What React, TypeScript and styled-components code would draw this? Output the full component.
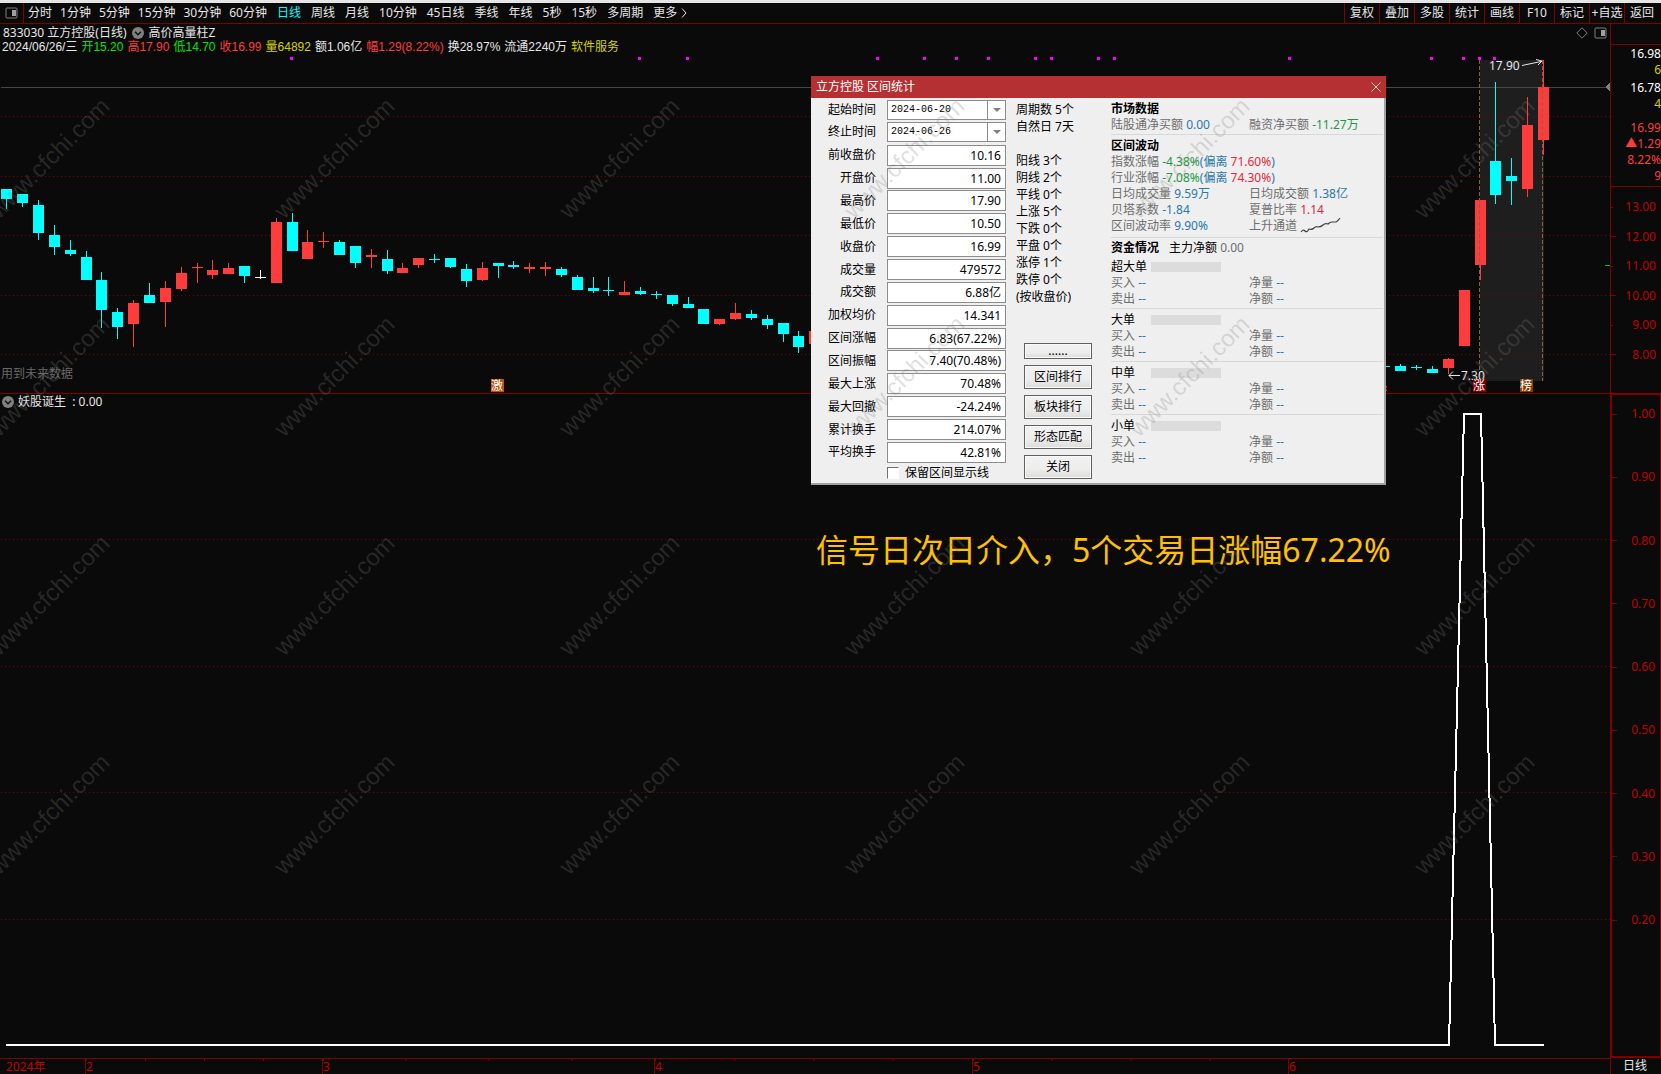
import React from "react";
import styled, { createGlobalStyle } from "styled-components";

const RED = "#ff3c3c";
const CYAN = "#00ffff";
const LINE = "#800000";
const UI_FONT = '"Noto Sans", "Noto Sans CJK SC", sans-serif';

const GlobalStyle = createGlobalStyle`
  * { box-sizing: border-box; }
  body { margin: 0; background: #0a0a0a; }
  button, input, select { font: inherit; color: inherit; margin: 0; }
`;

const Page = styled.div`
  position: relative;
  display: flex;
  flex-direction: column;
  min-height: 100vh;
  overflow: hidden;
  border-top: 3px solid #e6e6e6;
  background: #0a0a0a;
  color: #e6e6e6;
  font-family: ${UI_FONT};
  font-size: 12px;
  line-height: 16px;
`;

/* ---------- toolbar ---------- */

const Toolbar = styled.nav`
  display: flex;
  justify-content: space-between;
  height: 21px;
  border-bottom: 1px solid ${LINE};
`;

const ToolGroup = styled.div`
  display: flex;
  align-items: stretch;
`;

const PeriodGroup = styled(ToolGroup)<{ $gap: number }>`
  gap: ${(p) => p.$gap}px;
`;

const ActionGroup = styled(ToolGroup)`
  padding-right: 2px;
`;

const PlainButton = styled.button`
  display: flex;
  align-items: center;
  padding: 0;
  border: 0;
  background: none;
  white-space: nowrap;
  cursor: pointer;
`;

const LayoutButton = styled(PlainButton)`
  justify-content: center;
  width: 24px;
  margin-right: -4px;
  border-right: 1px solid ${LINE};
`;

const Period = styled(PlainButton)<{ $active?: boolean }>`
  color: ${(p) => (p.$active ? CYAN : "#e6e6e6")};
`;

const Action = styled(PlainButton)`
  justify-content: center;
  width: 35px;
  border-left: 1px solid ${LINE};
`;

/* ---------- chart area ---------- */

const Workspace = styled.main`
  flex: 1;
  display: grid;
  grid-template-columns: minmax(0, 1fr) 51px;
  grid-template-rows: 370px minmax(0, 1fr) 16px;
`;

const Panel = styled.section`
  position: relative;
  display: flex;
  flex-direction: column;
  min-height: 0;
`;

const PricePanel = styled(Panel)`
  padding-top: 2px;
  border-bottom: 1px solid ${LINE};
`;

const Plot = styled.svg`
  display: block;
  flex: 1 1 0;
  width: 100%;
  min-height: 0;
`;

const InfoRow = styled.div<{ $gap: number; $inset: number }>`
  display: flex;
  align-items: center;
  gap: ${(p) => p.$gap}px;
  height: 14px;
  padding: 0 3px 0 ${(p) => p.$inset}px;
  line-height: 14px;
  white-space: nowrap;
`;

const DayRow = styled(InfoRow)`
  font-family: "Liberation Sans", "Noto Sans CJK SC", sans-serif;
`;

const RowTools = styled.span`
  display: flex;
  align-items: center;
  gap: 6px;
  margin-left: auto;
`;

const Tint = styled.span<{ $color: string }>`
  color: ${(p) => p.$color};
`;

const FutureNote = styled.span`
  position: absolute;
  left: 1px;
  bottom: 11px;
  color: #686868;
`;

const IndicatorHead = styled.div`
  display: flex;
  align-items: center;
  gap: 4px;
  height: 16px;
  padding-left: 2px;
`;

const Slogan = styled.p`
  position: absolute;
  left: 816px;
  top: 523px;
  margin: 0;
  color: #ffc000;
  font-size: 32px;
  line-height: 48px;
  white-space: nowrap;
`;

/* ---------- right axis ---------- */

const Axis = styled.aside`
  display: flex;
  flex-direction: column;
  border-left: 1px solid ${LINE};
  border-bottom: 1px solid ${LINE};
  padding-top: 20px;
`;

const Quotes = styled.div`
  display: flex;
  flex-direction: column;
  align-items: flex-end;
  height: 143px;
  padding-top: 1px;
  border-top: 1px solid ${LINE};
  border-bottom: 1px solid ${LINE};
`;

const Quote = styled.span<{ $color: string; $space?: number }>`
  margin-top: ${(p) => p.$space ?? 0}px;
  color: ${(p) => p.$color};
`;

const Scale = styled.div`
  flex: 1;
  display: flex;
  flex-direction: column;
  justify-content: space-between;
  padding: 12px 0 30px;
  color: #c00000;
`;

const IndicatorScale = styled(Scale)`
  border: 2px solid ${LINE};
  border-right-width: 1px;
  border-top-width: 1px;
  padding: 11px 0 128px;
`;

const ScaleMark = styled.div<{ $major: boolean }>`
  display: flex;
  align-items: center;
  justify-content: space-between;
  padding-right: 5px;
  &::before {
    content: "";
    width: ${(p) => (p.$major ? 5 : 2)}px;
    height: 1px;
    background: ${LINE};
  }
`;

/* ---------- time axis ---------- */

const TimeAxis = styled.div`
  display: grid;
  grid-template-columns: 85fr 237fr 332fr 318fr 316fr 322fr;
  border-top: 1px solid ${LINE};
  color: #c00000;
  line-height: 15px;
`;

const Month = styled.span<{ $first?: boolean; $ticks?: boolean }>`
  padding-left: ${(p) => (p.$first ? 6 : 0)}px;
  border-left: ${(p) => (p.$first ? "0" : `1px solid ${LINE}`)};
  background: ${(p) =>
    p.$ticks ? `linear-gradient(to right, ${LINE} 1px, transparent 1px) 0 0 / 25% 2px repeat-x` : "none"};
`;

const CycleLabel = styled.span`
  padding-left: 12px;
  border-left: 1px solid ${LINE};
  line-height: 16px;
`;

/* ---------- statistics dialog ---------- */

const Dialog = styled.section`
  position: absolute;
  left: 811px;
  top: 73px;
  width: 575px;
  color: #000;
  background: #efefef;
  border-right: 2px solid #a0a0a0;
  border-bottom: 2px solid #a0a0a0;
`;

const TitleBar = styled.header`
  display: flex;
  align-items: center;
  justify-content: space-between;
  height: 22px;
  margin-right: -2px;
  padding: 0 5px;
  background: #b43032;
  color: #fff;
`;

const DialogTitle = styled.h2`
  margin: 0;
  font-size: 12px;
  font-weight: 400;
`;

const DialogBody = styled.div`
  display: flex;
  height: 385px;
`;

const FormColumn = styled.form`
  display: flex;
  flex-direction: column;
  width: 195px;
  padding-top: 1px;
`;

const Fields = styled.div`
  display: flex;
  flex-direction: column;
  justify-content: space-between;
  height: 364px;
`;

const Field = styled.div`
  display: grid;
  grid-template-columns: 65px 119px;
  justify-content: end;
  column-gap: 11px;
  align-items: center;
  height: 21px;
`;

const FieldLabel = styled.label`
  text-align: right;
  white-space: nowrap;
`;

const ValueBox = styled.input`
  width: 100%;
  height: 21px;
  padding: 0 4px;
  border: 1px solid #8c8c8c;
  border-radius: 0;
  background: #fff;
  text-align: right;
`;

const DateFrame = styled.div`
  display: grid;
  height: 20px;
  border: 1px solid #8c8c8c;
  background: #fff;
`;

const DateSelect = styled.select`
  grid-area: 1 / 1;
  padding: 0 0 0 3px;
  border: 0;
  border-radius: 0;
  background: none;
  appearance: none;
  font-family: "Liberation Mono", monospace;
  font-size: 10px;
`;

const DateCaret = styled.span`
  grid-area: 1 / 1;
  justify-self: end;
  display: flex;
  align-items: center;
  justify-content: center;
  width: 18px;
  border-left: 1px solid #8c8c8c;
  pointer-events: none;
  &::before {
    content: "";
    border: 4px solid transparent;
    border-top-color: #808080;
    border-bottom: 0;
  }
`;

const KeepLine = styled.label`
  display: flex;
  align-items: center;
  gap: 6px;
  padding: 2px 0 0 76px;
  white-space: nowrap;
`;

const Tick = styled.input`
  appearance: none;
  width: 12px;
  height: 12px;
  border: 1px solid;
  border-color: #707070 #fff #fff #707070;
  background: #fff;
`;

const CountColumn = styled.div`
  display: flex;
  flex-direction: column;
  justify-content: space-between;
  width: 105px;
  padding: 3px 23px 4px 10px;
`;

const Counts = styled.ul`
  margin: 0;
  padding: 0;
  list-style: none;
  line-height: 17px;
  white-space: nowrap;
  li:nth-child(3) { margin-top: 17px; }
`;

const ButtonStack = styled.div`
  display: flex;
  flex-direction: column;
  gap: 6px;
  margin: 0 -4px 0 8px;
`;

const PushButton = styled.button<{ $short?: boolean }>`
  height: ${(p) => (p.$short ? 16 : 24)}px;
  padding: 0;
  border: 1px solid #606060;
  box-shadow: inset 0 0 0 1px #fafafa;
  background: linear-gradient(#f2f2f2, #ededed 60%, #dcdcd8);
  line-height: ${(p) => (p.$short ? 12 : 20)}px;
  cursor: pointer;
`;

const DataColumn = styled.div`
  flex: 1;
  padding: 3px 1px 0 0;
`;

const Block = styled.div<{ $top: number; $bottom: number; $rule?: boolean }>`
  padding: ${(p) => p.$top}px 0 ${(p) => p.$bottom}px;
  border-bottom: ${(p) => (p.$rule ? "1px solid #d8d8d8" : "0")};
`;

const Pair = styled.div`
  display: grid;
  grid-template-columns: 138px 1fr;
  color: #6e6e6e;
  white-space: nowrap;
`;

const Heading = styled.h3`
  margin: 0;
  font-size: 12px;
  font-weight: 700;
`;

const FlowHead = styled.div`
  display: flex;
  gap: 10px;
  white-space: nowrap;
`;

const OrderHead = styled.div`
  display: grid;
  grid-template-columns: 36px 70px;
  align-items: center;
  column-gap: 4px;
  white-space: nowrap;
`;

const OrderBar = styled.span`
  height: 10px;
  background: #dcdcdc;
`;

const TrendIcon = styled.svg`
  width: 42px;
  height: 16px;
  margin-left: 3px;
  vertical-align: top;
`;

const WatermarkLayer = styled.svg`
  position: absolute;
  inset: -3px 0 0;
  width: 100%;
  height: calc(100% + 3px);
  pointer-events: none;
`;

/* ---------- data ---------- */

const minutePeriods = ["分时", "1分钟", "5分钟", "15分钟", "30分钟", "60分钟"];
const longPeriods = ["日线", "周线", "月线", "10分钟", "45日线", "季线", "年线", "5秒", "15秒", "多周期"];
const actions = ["复权", "叠加", "多股", "统计", "画线", "F10", "标记", "+自选", "返回"];

const dayInfo: [string, string][] = [
  ["2024/06/26/三", "#e6e6e6"],
  ["开15.20", "#00e600"],
  ["高17.90", RED],
  ["低14.70", "#00e600"],
  ["收16.99", RED],
  ["量64892", "#d2d200"],
  ["额1.06亿", "#e6e6e6"],
  ["幅1.29(8.22%)", RED],
  ["换28.97%", "#e6e6e6"],
  ["流通2240万", "#e6e6e6"],
  ["软件服务", "#d2d200"],
];

// [left, body top, body bottom, wick top, wick bottom, colour: c(yan) r(ed) w(hite)]
type Candle = [number, number, number, number, number, string];
const candles: Candle[] = [
  [1, 189, 199, 189, 209, "c"], [17, 194, 203, 194, 207, "c"], [33, 205, 233, 200, 240, "c"],
  [49, 235, 247, 225, 255, "c"], [65, 250, 254, 240, 256, "c"], [81, 257, 280, 251, 280, "c"],
  [96, 280, 310, 272, 328, "c"], [112, 312, 327, 308, 339, "c"], [128, 303, 324, 300, 347, "r"],
  [144, 295, 303, 283, 303, "c"], [160, 288, 302, 281, 327, "r"], [176, 273, 289, 267, 291, "r"],
  [192, 267, 268, 263, 283, "r"], [207, 270, 275, 260, 279, "r"], [223, 268, 274, 263, 274, "r"],
  [239, 266, 276, 266, 283, "c"], [255, 277, 278, 270, 279, "w"], [271, 222, 283, 218, 283, "r"],
  [287, 222, 251, 213, 251, "c"], [302, 242, 259, 230, 259, "r"], [318, 241, 242, 232, 248, "r"],
  [334, 242, 255, 240, 255, "c"], [350, 246, 263, 246, 268, "c"], [366, 255, 257, 249, 268, "r"],
  [382, 259, 271, 250, 274, "c"], [397, 268, 273, 263, 273, "r"], [413, 258, 265, 258, 268, "r"],
  [429, 259, 260, 254, 263, "c"], [445, 258, 267, 258, 268, "c"], [461, 269, 281, 264, 287, "c"],
  [477, 268, 280, 262, 281, "r"], [493, 263, 266, 263, 278, "c"], [508, 265, 267, 261, 269, "c"],
  [524, 267, 269, 263, 273, "r"], [540, 267, 269, 262, 276, "r"], [556, 269, 275, 267, 277, "c"],
  [572, 277, 290, 275, 290, "c"], [588, 288, 291, 277, 293, "c"], [603, 290, 291, 277, 296, "c"],
  [619, 292, 295, 281, 295, "r"], [635, 291, 294, 287, 295, "c"], [651, 294, 295, 291, 299, "c"],
  [667, 295, 304, 295, 306, "c"], [683, 304, 308, 297, 308, "c"], [698, 309, 324, 309, 324, "c"],
  [714, 319, 324, 319, 325, "r"], [730, 313, 319, 303, 320, "r"], [746, 314, 318, 310, 320, "c"],
  [762, 319, 325, 315, 329, "c"], [778, 323, 334, 323, 342, "c"], [793, 336, 347, 331, 353, "c"],
  [809, 331, 344, 331, 344, "r"], [1379, 366, 367, 366, 367, "c"], [1395, 366, 371, 364, 371, "c"],
  [1411, 367, 368, 365, 370, "c"], [1427, 369, 373, 366, 373, "c"], [1443, 359, 368, 358, 374, "r"],
  [1459, 290, 346, 290, 346, "r"], [1475, 200, 265, 200, 280, "r"], [1490, 161, 195, 82, 204, "c"],
  [1506, 176, 181, 158, 205, "c"], [1522, 125, 189, 97, 197, "r"], [1538, 87, 140, 60, 155, "r"],
];
const candleColor: Record<string, string> = { c: CYAN, r: RED, w: "#ffffff" };
const signalDots = [290, 638, 686, 876, 923, 955, 987, 1034, 1050, 1097, 1113, 1288, 1430, 1462, 1478, 1493];

const quotes: [string, string, number][] = [
  ["16.98", "#ffffff", 0], ["6", "#d2d200", 0], ["16.78", "#ffffff", 2], ["4", "#d2d200", 0],
  ["16.99", RED, 8], ["▲1.29", RED, 0], ["8.22%", RED, 0], ["9", RED, 0],
];
const prices = ["13.00", "12.00", "11.00", "10.00", "9.00", "8.00"];
const levels = ["1.00", "0.90", "0.80", "0.70", "0.60", "0.50", "0.40", "0.30", "0.20"];

const stats: [string, string][] = [
  ["前收盘价", "10.16"], ["开盘价", "11.00"], ["最高价", "17.90"], ["最低价", "10.50"],
  ["收盘价", "16.99"], ["成交量", "479572"], ["成交额", "6.88亿"], ["加权均价", "14.341"],
  ["区间涨幅", "6.83(67.22%)"], ["区间振幅", "7.40(70.48%)"], ["最大上涨", "70.48%"],
  ["最大回撤", "-24.24%"], ["累计换手", "214.07%"], ["平均换手", "42.81%"],
];
const counts = ["周期数 5个", "自然日 7天", "阳线 3个", "阴线 2个", "平线 0个", "上涨 5个", "下跌 0个", "平盘 0个", "涨停 1个", "跌停 0个", "(按收盘价)"];

const BLUE = "#2878a8";
const GREEN = "#1e9646";
const ROSE = "#e6283c";

/* ---------- parts ---------- */

const PanelIcon = () => (
  <svg width="13" height="12" viewBox="0 0 13 12" aria-hidden="true">
    <rect x="1" y="1" width="11" height="10" rx="1" fill="none" stroke="#808080" />
    <rect x="7" y="3" width="4" height="6" fill="#a0a0a0" />
  </svg>
);

const ChevronIcon = () => (
  <svg width="12" height="12" viewBox="0 0 12 12" aria-hidden="true">
    <circle cx="6" cy="6" r="6" fill="#808080" />
    <path d="M3 4.8 6 7.8 9 4.8" fill="none" stroke="#101010" strokeWidth="1.4" />
  </svg>
);

const Marker = ({ x, fill, children }: { x: number; fill: string; children: string }) => (
  <g>
    <rect x={x} y="379" width="13" height="13" fill={fill} />
    <text x={x + 6} y="390" textAnchor="middle" fontSize="12" fill="#fff">{children}</text>
  </g>
);

const PricePlot = () => (
  <Plot viewBox="0 54 1610 339" preserveAspectRatio="xMaxYMin meet" shapeRendering="crispEdges" role="img" aria-label="日线">
    <rect x="1480" y="60" width="64" height="321" fill="#1e1e1e" />
    {[116, 176, 235, 295, 354].map((y) => (
      <line key={y} x1="1" x2="1610" y1={y + 0.5} y2={y + 0.5} stroke="#780000" strokeDasharray="1 3" />
    ))}
    <line x1="1" x2="1610" y1="87.5" y2="87.5" stroke="#464646" />
    <path d="M1610 83v8l-5-4z" fill="#808080" />
    {signalDots.map((x) => (
      <rect key={x} x={x} y="57" width="3" height="3" fill="#ff00ff" />
    ))}
    {candles.map(([x, top, bottom, high, low, tone]) => (
      <g key={x} fill={candleColor[tone]}>
        <rect x={x} y={top} width="11" height={bottom - top} />
        <rect x={x + 5} y={high} width="1" height={low - high} />
      </g>
    ))}
    <path d="M1479.500 60V381M1542.500 60V381" stroke="#8c5f41" strokeDasharray="4 2" />
    <path d="M1605 265.500h5" stroke="#00c800" />
    <path d="M1386 386h1v2h-1zM1386 389h1v2h-1z" fill="#ff0000" />
    <text x="1489" y="70" fontSize="12" fill="#e6e6e6">17.90</text>
    <path d="M1522 65.500 1541 61.500M1536 59.500l6 1.500-4 4" fill="none" stroke="#e6e6e6" shapeRendering="auto" />
    <text x="1461" y="380" fontSize="12" fill="#e6e6e6">7.30</text>
    <path d="M1460 375.500h-11M1453 371.500l-4 4 4 4" fill="none" stroke="#e6e6e6" shapeRendering="auto" />
    <Marker x={491} fill="#c0500a">激</Marker>
    <Marker x={1473} fill="#800000">涨</Marker>
    <Marker x={1520} fill="#804000">榜</Marker>
  </Plot>
);

const IndicatorPlot = () => (
  <Plot viewBox="0 410 1610 648" preserveAspectRatio="none" shapeRendering="crispEdges" role="img" aria-label="妖股诞生">
    {[539, 666, 792, 919].map((y) => (
      <line key={y} x1="1" x2="1610" y1={y + 0.5} y2={y + 0.5} stroke="#780000" strokeDasharray="1 3" />
    ))}
    <path d="M6 1045H1449L1464 414H1481L1495 1045H1544" fill="none" stroke="#fff" strokeWidth="2" />
  </Plot>
);

const DateField = ({ id, label, value }: { id: string; label: string; value: string }) => (
  <Field>
    <FieldLabel htmlFor={id}>{label}</FieldLabel>
    <DateFrame>
      <DateSelect id={id} defaultValue={value}>
        <option>{value}</option>
      </DateSelect>
      <DateCaret />
    </DateFrame>
  </Field>
);

const OrderBlock = ({ name, last }: { name: string; last?: boolean }) => (
  <Block $top={3} $bottom={1} $rule={!last}>
    <OrderHead>{name}<OrderBar /></OrderHead>
    <Pair>
      <span>买入 <Tint $color={BLUE}>--</Tint></span>
      <span>净量 <Tint $color={BLUE}>--</Tint></span>
    </Pair>
    <Pair>
      <span>卖出 <Tint $color={BLUE}>--</Tint></span>
      <span>净额 <Tint $color={BLUE}>--</Tint></span>
    </Pair>
  </Block>
);

const StatsDialog = () => (
  <Dialog role="dialog" aria-labelledby="stats-title">
    <TitleBar>
      <DialogTitle id="stats-title">立方控股 区间统计</DialogTitle>
      <PlainButton aria-label="关闭窗口">
        <svg width="10" height="10" viewBox="0 0 10 10"><path d="M.5.5l9 9M9.500.5l-9 9" stroke="#f0d0d0" /></svg>
      </PlainButton>
    </TitleBar>
    <DialogBody>
      <FormColumn>
        <Fields>
          <DateField id="date-from" label="起始时间" value="2024-06-20" />
          <DateField id="date-to" label="终止时间" value="2024-06-26" />
          {stats.map(([label, value], i) => (
            <Field key={label}>
              <FieldLabel htmlFor={`stat-${i}`}>{label}</FieldLabel>
              <ValueBox id={`stat-${i}`} readOnly value={value} />
            </Field>
          ))}
        </Fields>
        <KeepLine><Tick type="checkbox" />保留区间显示线</KeepLine>
      </FormColumn>
      <CountColumn>
        <Counts>{counts.map((c) => <li key={c}>{c}</li>)}</Counts>
        <ButtonStack>
          <PushButton $short>......</PushButton>
          <PushButton>区间排行</PushButton>
          <PushButton>板块排行</PushButton>
          <PushButton>形态匹配</PushButton>
          <PushButton>关闭</PushButton>
        </ButtonStack>
      </CountColumn>
      <DataColumn>
        <Block $top={0} $bottom={1} $rule>
          <Heading>市场数据</Heading>
          <Pair>
            <span>陆股通净买额 <Tint $color={BLUE}>0.00</Tint></span>
            <span>融资净买额 <Tint $color={GREEN}>-11.27万</Tint></span>
          </Pair>
        </Block>
        <Block $top={3} $bottom={3} $rule>
          <Heading>区间波动</Heading>
          <Pair>
            <span>指数涨幅 <Tint $color={GREEN}>-4.38%</Tint><Tint $color={BLUE}>(偏离 <Tint $color={ROSE}>71.60%</Tint>)</Tint></span>
          </Pair>
          <Pair>
            <span>行业涨幅 <Tint $color={GREEN}>-7.08%</Tint><Tint $color={BLUE}>(偏离 <Tint $color={ROSE}>74.30%</Tint>)</Tint></span>
          </Pair>
          <Pair>
            <span>日均成交量 <Tint $color={BLUE}>9.59万</Tint></span>
            <span>日均成交额 <Tint $color={BLUE}>1.38亿</Tint></span>
          </Pair>
          <Pair>
            <span>贝塔系数 <Tint $color={BLUE}>-1.84</Tint></span>
            <span>夏普比率 <Tint $color={ROSE}>1.14</Tint></span>
          </Pair>
          <Pair>
            <span>区间波动率 <Tint $color={BLUE}>9.90%</Tint></span>
            <span>
              上升通道
              <TrendIcon viewBox="0 0 42 16" aria-hidden="true">
                <path d="M1 14q2-3 4-1t4-2q3 1 5-1t4-1q3 0 5-2t5-1q2-2 4-2t4 0q2-1 4-4" fill="none" stroke="#404040" strokeWidth="1.2" />
              </TrendIcon>
            </span>
          </Pair>
        </Block>
        <Block $top={2} $bottom={0}>
          <FlowHead>
            <Heading>资金情况</Heading>
            <span>主力净额 <Tint $color="#6e6e6e">0.00</Tint></span>
          </FlowHead>
        </Block>
        <OrderBlock name="超大单" />
        <OrderBlock name="大单" />
        <OrderBlock name="中单" />
        <OrderBlock name="小单" last />
      </DataColumn>
    </DialogBody>
  </Dialog>
);

const Watermarks = () => (
  <WatermarkLayer aria-hidden="true">
    {[220, 438, 657, 876].map((y) =>
      [-1, 284, 569, 854, 1139, 1424].map((x) => (
        <text
          key={`${x}-${y}`}
          transform={`translate(${x} ${y}) rotate(-45)`}
          fontFamily="Liberation Sans, sans-serif"
          fontSize="24"
          fill="#808080"
          fillOpacity="0.26"
        >
          www.cfchi.com
        </text>
      ))
    )}
  </WatermarkLayer>
);

export default function App() {
  return (
    <Page>
      <GlobalStyle />
      <Toolbar>
        <PeriodGroup $gap={10}>
          <PeriodGroup $gap={8}>
            <LayoutButton aria-label="布局"><PanelIcon /></LayoutButton>
            {minutePeriods.map((p) => <Period key={p}>{p}</Period>)}
          </PeriodGroup>
          {longPeriods.map((p) => <Period key={p} $active={p === "日线"}>{p}</Period>)}
          <Period>
            更多
            <svg width="11" height="10" viewBox="0 0 11 10" aria-hidden="true"><path d="M5 .5 9 5 5 9.500" fill="none" stroke="#e6e6e6" /></svg>
          </Period>
        </PeriodGroup>
        <ActionGroup>
          {actions.map((a) => <Action key={a}>{a}</Action>)}
        </ActionGroup>
      </Toolbar>

      <Workspace>
        <PricePanel>
          <InfoRow $gap={5} $inset={3}>
            <span>833030 立方控股(日线)</span>
            <ChevronIcon />
            <span>高价高量柱Z</span>
            <RowTools>
              <svg width="12" height="12" viewBox="0 0 12 12" aria-hidden="true"><path d="M6 .8 11.200 6 6 11.200.8 6z" fill="none" stroke="#808080" /></svg>
              <PanelIcon />
            </RowTools>
          </InfoRow>
          <DayRow $gap={4} $inset={2}>
            {dayInfo.map(([text, color]) => <Tint key={text} $color={color}>{text}</Tint>)}
          </DayRow>
          <PricePlot />
          <FutureNote>用到未来数据</FutureNote>
        </PricePanel>

        <Axis>
          <Quotes>
            {quotes.map(([text, color, space]) => <Quote key={text} $color={color} $space={space}>{text}</Quote>)}
          </Quotes>
          <Scale>
            {prices.map((p, i) => <ScaleMark key={p} $major={i % 2 === 1}>{p}</ScaleMark>)}
          </Scale>
        </Axis>

        <Panel>
          <IndicatorHead>
            <ChevronIcon />
            <span>妖股诞生&nbsp; : 0.00</span>
          </IndicatorHead>
          <IndicatorPlot />
        </Panel>

        <IndicatorScale>
          {levels.map((l) => <ScaleMark key={l} $major>{l}</ScaleMark>)}
        </IndicatorScale>

        <TimeAxis>
          <Month $first>2024年</Month>
          <Month $ticks>2</Month>
          <Month $ticks>3</Month>
          <Month $ticks>4</Month>
          <Month $ticks>5</Month>
          <Month>6</Month>
        </TimeAxis>
        <CycleLabel>日线</CycleLabel>
      </Workspace>

      <StatsDialog />
      <Slogan>信号日次日介入，5个交易日涨幅67.22%</Slogan>
      <Watermarks />
    </Page>
  );
}
